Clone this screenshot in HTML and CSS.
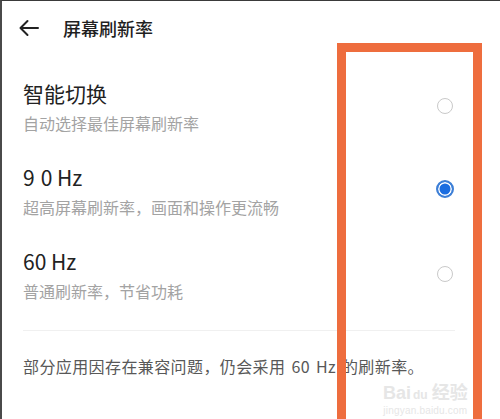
FILE: index.html
```html
<!DOCTYPE html>
<html lang="zh">
<head>
<meta charset="utf-8">
<link rel="stylesheet" href="styles.css">
</head>
<body>
<div class="screen">
  <header class="header">
    <svg class="back" width="24" height="24" viewBox="0 0 24 24"><path d="M21 12H4M10.5 5L3.5 12l7 7" fill="none" stroke="#222" stroke-width="2" stroke-linecap="round" stroke-linejoin="round"/></svg>
    <h1 class="title">屏幕刷新率</h1>
  </header>

  <div class="option">
    <div class="text">
      <div class="name">智能切换</div>
      <div class="desc">自动选择最佳屏幕刷新率</div>
    </div>
    <span class="radio"></span>
  </div>

  <div class="option">
    <div class="text">
      <div class="name"><span class="n9">9</span>0 Hz</div>
      <div class="desc">超高屏幕刷新率，画面和操作更流畅</div>
    </div>
    <span class="radio checked"></span>
  </div>

  <div class="option">
    <div class="text">
      <div class="name">60 Hz</div>
      <div class="desc">普通刷新率，节省功耗</div>
    </div>
    <span class="radio"></span>
  </div>

  <div class="divider"></div>

  <p class="note">部分应用因存在兼容问题，仍会采用 60 Hz 的刷新率。</p>

  <div class="annot"></div>
  <div class="watermark">
    <div class="wm-logo">Bai<span class="wm-du">du</span>经验</div>
    <div class="wm-url">jingyan.baidu.com</div>
  </div>
</div>
</body>
</html>
```

FILE: styles.css
```css
* { box-sizing: border-box; }
html, body { margin: 0; padding: 0; background: #fff; }
body { font-family: "Noto Sans CJK SC", "Noto Sans", sans-serif; }

.screen {
  position: relative;
  width: 500px;
  height: 419px;
  overflow: hidden;
  border-top: 1px solid #3a3a3a;
  border-left: 2px solid #4a4a4a;
  background: #fff;
}

.header {
  height: 53px;
  display: flex;
  align-items: center;
  padding-left: 15px;
  gap: 22px;
}
.back { display: block; }
.title {
  margin: 0;
  font-size: 18px;
  font-weight: 500;
  color: #1f1f1f;
  line-height: 24px;
}

.option {
  display: flex;
  align-items: flex-start;
  padding: 25px 47px 4px 21px;
  height: 84px;
}
.text { flex: 1; }
.name {
  font-size: 21px;
  line-height: 28px;
  color: #222;
}
.n9 { margin-right: 6px; }
.desc {
  margin-top: 5px;
  font-size: 16px;
  line-height: 22px;
  color: #a3a3a3;
}

.radio {
  width: 16px;
  height: 16px;
  margin-top: 19px;
  border-radius: 50%;
  border: 1.5px solid #c9c9c9;
  flex: none;
}
.radio.checked {
  width: 18px;
  height: 18px;
  margin-top: 17px;
  margin-right: -1px;
  border: 2px solid #3d7fd6;
  background: #1b6de0;
  box-shadow: inset 0 0 0 1.5px #fff;
}

.divider {
  margin: 24px 45px 0 21px;
  height: 1px;
  background: #f0f0f0;
}

.note {
  margin: 24px 0 0 21px;
  font-size: 16px;
  line-height: 22px;
  letter-spacing: 0.4px;
  word-spacing: 2px;
  color: #585858;
}

.annot {
  position: absolute;
  left: 335px;
  top: 42px;
  width: 145px;
  height: 420px;
  border: 9px solid #ee6d3e;
}

.watermark {
  position: absolute;
  left: 381px;
  top: 382px;
  color: #e6e6e6;
  text-align: center;
}
.wm-logo {
  font-family: "Liberation Sans", "Noto Sans CJK SC", sans-serif;
  font-size: 18px;
  line-height: 20px;
  font-weight: 700;
}
.wm-du { font-size: 12px; margin: 0 4px 0 2px; }
.wm-url {
  font-family: "Liberation Sans", sans-serif;
  font-size: 10px;
  line-height: 12px;
  letter-spacing: 0.2px;
}
```
